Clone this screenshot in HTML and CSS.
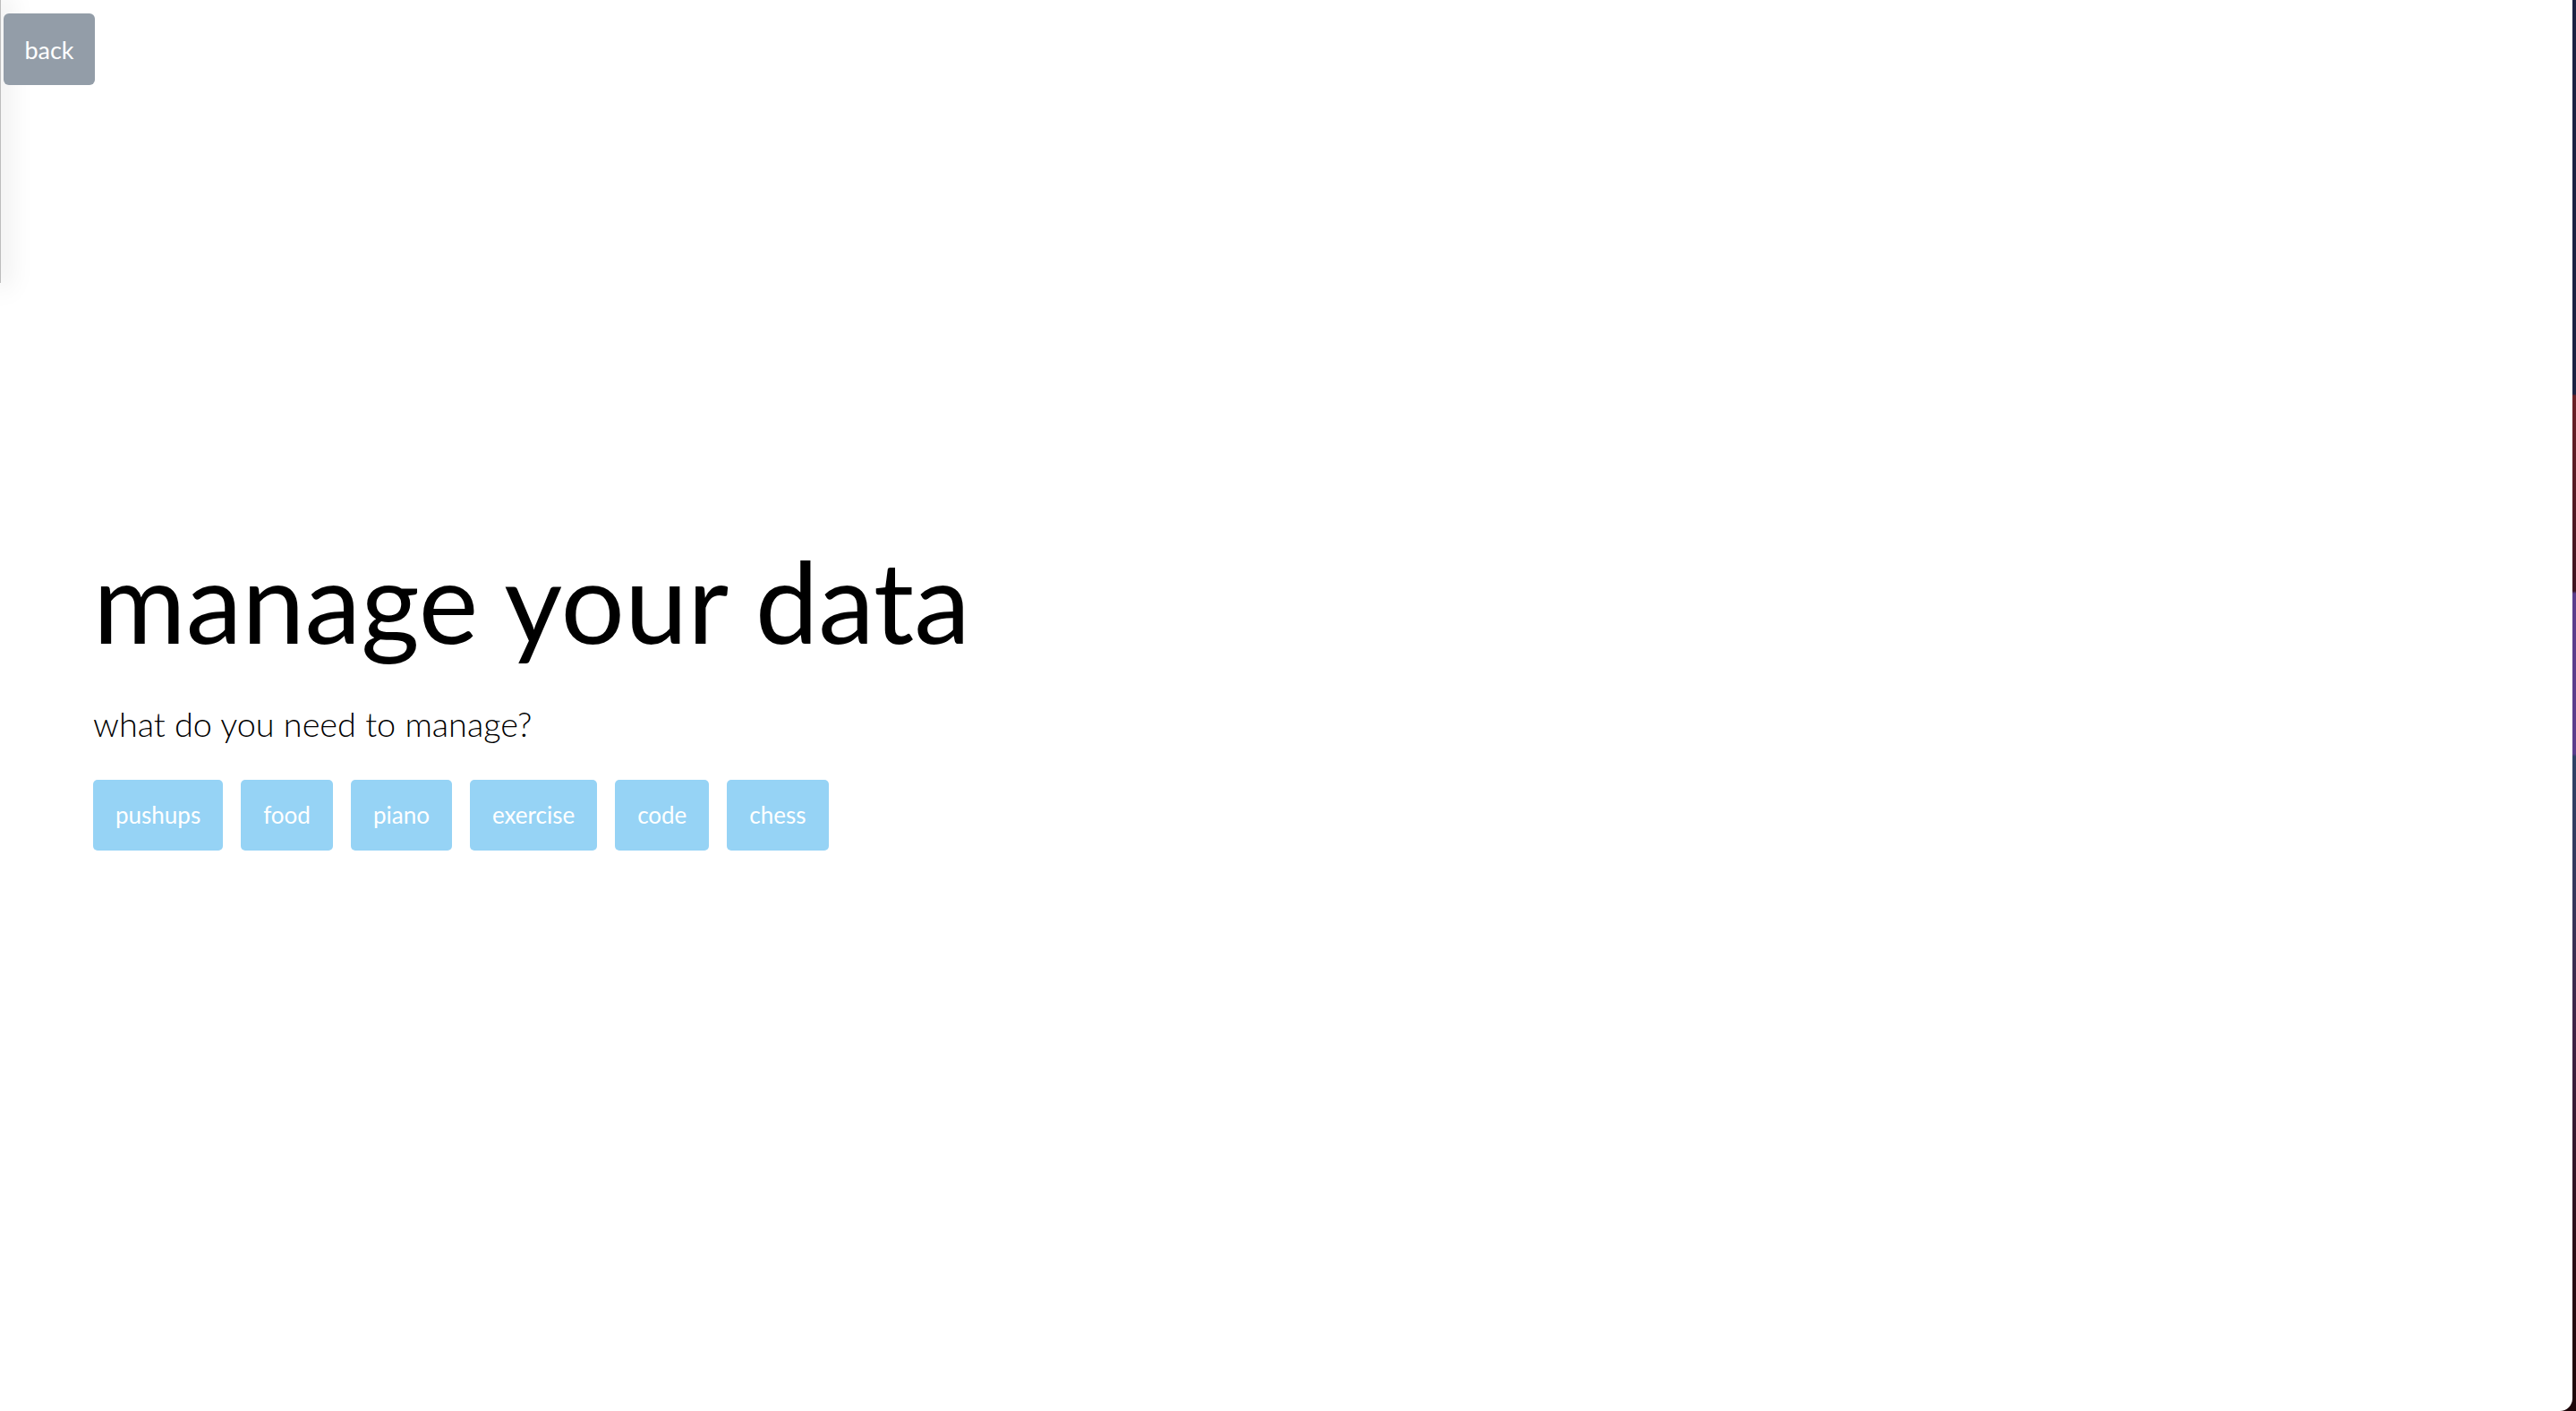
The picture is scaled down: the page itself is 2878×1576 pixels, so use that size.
FILE: index.html
```html
<!DOCTYPE html>
<html lang="en">
<head>
<meta charset="utf-8">
<title>manage your data</title>
<link rel="stylesheet" href="styles.css">
</head>
<body>
<div class="window">
  <div class="drawer-edge"></div>
  <button class="back-btn">back</button>
  <main class="content">
    <h1 class="title">manage your data</h1>
    <p class="subtitle">what do you need to manage?</p>
    <div class="choices">
      <button class="choice">pushups</button>
      <button class="choice">food</button>
      <button class="choice">piano</button>
      <button class="choice">exercise</button>
      <button class="choice">code</button>
      <button class="choice">chess</button>
    </div>
  </main>
</div>
</body>
</html>
```

FILE: styles.css
```css
html, body {
  margin: 0;
  padding: 0;
  height: 100%;
}
body {
  font-family: Lato, "Open Sans", sans-serif;
  background: linear-gradient(to bottom,
    #1c2142 0px, #1c2142 440px,
    #6b2127 442px, #3e1420 660px,
    #5b3d8c 663px, #5b3d8c 842px,
    #2f4266 845px, #36375c 1000px,
    #3f2346 1150px, #2a0d14 1400px, #1c0508 1576px);
  display: flex;
}
.window {
  position: relative;
  flex: 1;
  margin-right: 4px;
  background: #ffffff;
  border-bottom-right-radius: 14px;
  overflow: hidden;
}
.drawer-edge {
  position: absolute;
  left: 0;
  top: 0;
  width: 1px;
  height: 316px;
  background: #bdbdbd;
  box-shadow: 0 0 30px 6px rgba(0, 0, 0, 0.12);
}
.back-btn {
  position: absolute;
  left: 4px;
  top: 15px;
  width: 102px;
  height: 80px;
  border: none;
  border-radius: 6px;
  background: #939da8;
  color: #ffffff;
  font-family: Lato, sans-serif;
  font-size: 27px;
  padding: 0;
}
.content {
  padding: 595px 0 0 104px;
  display: flex;
  flex-direction: column;
  align-items: flex-start;
}
.title {
  margin: 0;
  font-size: 126px;
  font-weight: 400;
  line-height: 1.2;
  color: #000;
}
.subtitle {
  margin: 40px 0 0 0;
  font-size: 37.8px;
  font-weight: 300;
  line-height: 1.2;
  color: #000;
}
.choices {
  margin-top: 39px;
  display: flex;
  gap: 20px;
}
.choice {
  height: 79px;
  padding: 0 25px;
  border: none;
  border-radius: 5px;
  background: #96d3f5;
  color: #ffffff;
  font-family: Lato, sans-serif;
  font-size: 26px;
}
```
